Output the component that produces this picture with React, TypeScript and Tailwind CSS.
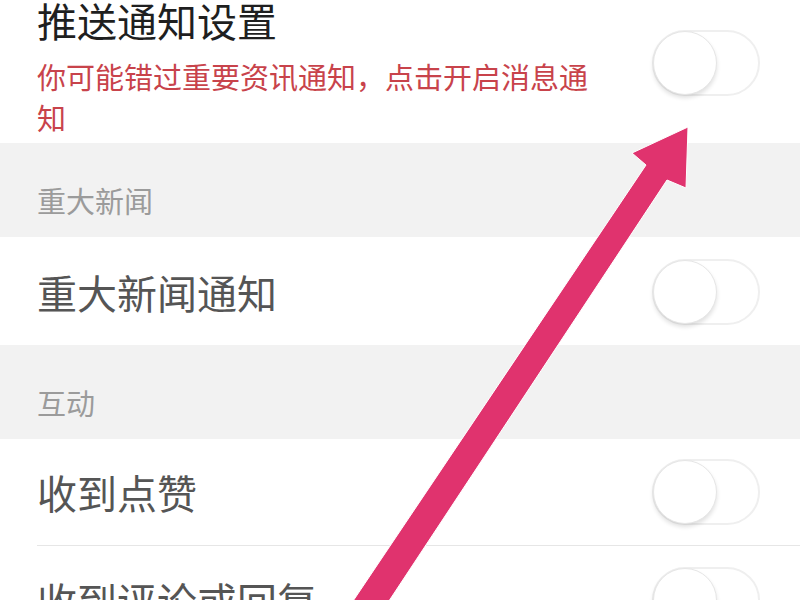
import React, { useState } from 'react';

const font = { fontFamily: '"Noto Sans CJK SC", "Noto Sans", sans-serif' };

const Toggle: React.FC<{ on: boolean; onChange: () => void }> = ({ on, onChange }) => (
  <button
    onClick={onChange}
    className={`relative w-[108px] h-[66px] rounded-full border-2 shrink-0 ${
      on ? 'bg-[#4cd964] border-[#4cd964]' : 'bg-white border-[#efefef]'
    }`}
  >
    <span
      className={`absolute top-[-1px] w-[64px] h-[64px] rounded-full bg-white border border-[#e6e6e6] shadow-[0_3px_4px_rgba(0,0,0,0.12)] ${
        on ? 'left-[41px]' : 'left-[-1px]'
      }`}
    />
  </button>
);

const SectionLabel: React.FC<{ text: string }> = ({ text }) => (
  <div className="bg-[#f2f2f2] h-[94px] flex items-end pl-[37px] pb-[22px]">
    <span className="text-[29px] leading-[29px] text-[#9b9b9b]">{text}</span>
  </div>
);

const Row: React.FC<{ label: string; on: boolean; onChange: () => void; divider?: boolean }> = ({
  label,
  on,
  onChange,
  divider,
}) => (
  <div className="pl-[37px]">
    <div className={`h-[107px] flex items-center justify-between pr-[40px] ${divider ? 'border-b border-[#e6e6e6]' : ''}`}>
      <span className="text-[40px] leading-[40px] text-[#555]">{label}</span>
      <Toggle on={on} onChange={onChange} />
    </div>
  </div>
);

export default function App() {
  const [push, setPush] = useState(false);
  const [news, setNews] = useState(false);
  const [likes, setLikes] = useState(false);
  const [replies, setReplies] = useState(false);

  return (
    <div className="relative w-full h-[600px] overflow-hidden bg-white" style={font}>
      <div className="h-[143px] flex items-start justify-between pl-[37px] pr-[40px]">
        <div className="flex flex-col">
          <span className="text-[40px] leading-[40px] text-[#1f1f1f]">推送通知设置</span>
          <p className="mt-[16px] w-[570px] text-[29px] leading-[41px] text-[#c8434b]">
            你可能错过重要资讯通知，点击开启消息通知
          </p>
        </div>
        <div className="mt-[30px]">
          <Toggle on={push} onChange={() => setPush(!push)} />
        </div>
      </div>

      <SectionLabel text="重大新闻" />
      <div className="h-[1px]" />
      <Row label="重大新闻通知" on={news} onChange={() => setNews(!news)} />

      <SectionLabel text="互动" />
      <Row label="收到点赞" on={likes} onChange={() => setLikes(!likes)} divider />
      <Row label="收到评论或回复" on={replies} onChange={() => setReplies(!replies)} />

      <svg className="absolute inset-0 pointer-events-none" width="800" height="600" viewBox="0 0 800 600">
        <polygon
          points="688,127 686,188 667,180 383,610 347,610 646,165 632,153"
          fill="#e0336e"
          stroke="#ffffff"
          strokeWidth="1"
          strokeLinejoin="round"
        />
      </svg>
    </div>
  );
}
